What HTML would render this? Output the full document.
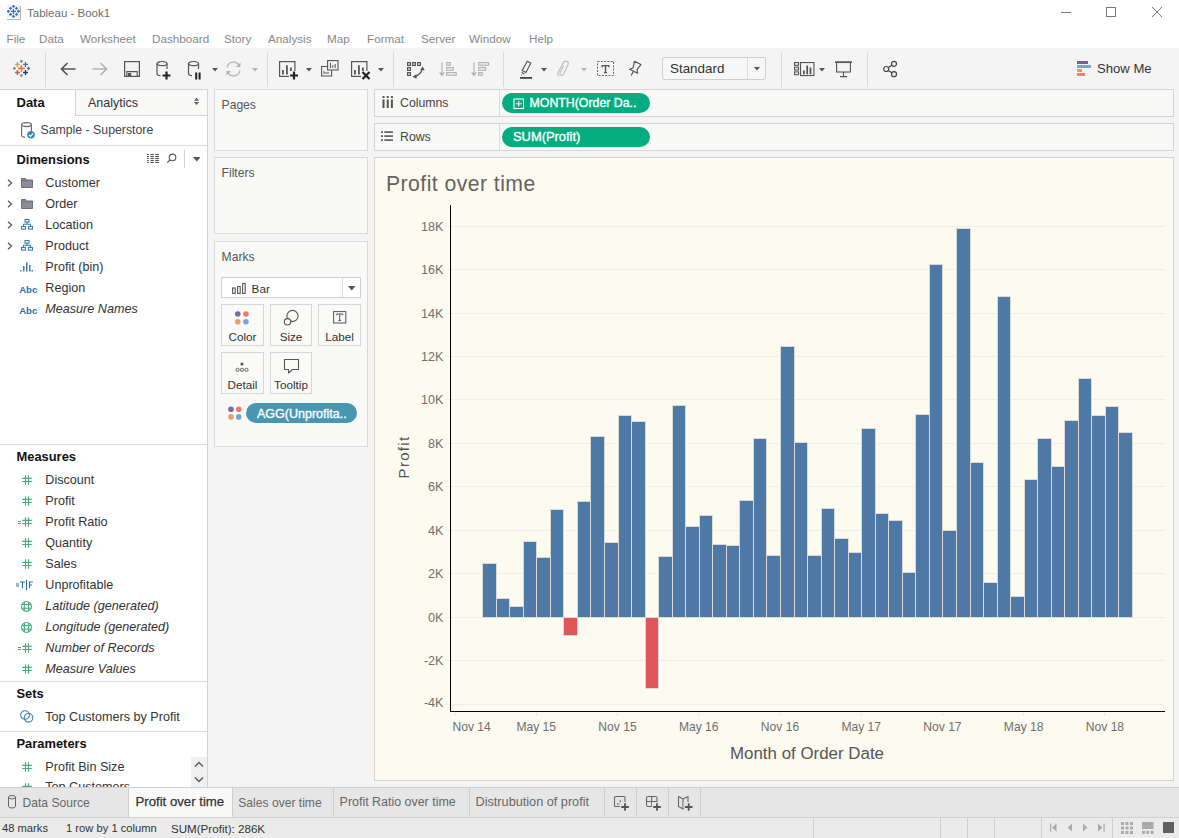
<!DOCTYPE html><html><head><meta charset="utf-8"><style>
html,body{margin:0;padding:0;}body{width:1179px;height:838px;position:relative;overflow:hidden;background:#f4f4f4;font-family:"Liberation Sans",sans-serif;}
.t{position:absolute;white-space:nowrap;}.r{position:absolute;}svg.r{overflow:visible}
</style></head><body>
<div class="r" style="left:0px;top:0px;width:1179px;height:48px;background:#ffffff;"></div>
<div class="r" style="left:7px;top:5px;width:13px;height:13px;background:#f0f1f2;"></div>
<div class="r" style="left:20px;top:6px;width:1px;height:14px;background:#b4b4b4;"></div>
<div class="r" style="left:7px;top:19px;width:14px;height:1px;background:#b4b4b4;"></div>
<svg class="r" style="left:0px;top:0px;" width="1" height="1" viewBox="0 0 1 1"><path d="M11.0 11.4H16.0M13.5 8.9V13.9" stroke="#2e75c0" stroke-width="1.2"/><path d="M12.1 6.4H14.9M13.5 5.0V7.800000000000001" stroke="#2e75c0" stroke-width="1.3"/><path d="M9.1 8.4H11.9M10.5 7.0V9.8" stroke="#2e75c0" stroke-width="1.3"/><path d="M15.1 8.4H17.9M16.5 7.0V9.8" stroke="#2e75c0" stroke-width="1.3"/><path d="M7.0 11.4H9.8M8.4 10.0V12.8" stroke="#2e75c0" stroke-width="1.3"/><path d="M17.1 11.4H19.9M18.5 10.0V12.8" stroke="#2e75c0" stroke-width="1.3"/><path d="M9.1 14.4H11.9M10.5 13.0V15.8" stroke="#2e75c0" stroke-width="1.3"/><path d="M15.1 14.4H17.9M16.5 13.0V15.8" stroke="#2e75c0" stroke-width="1.3"/><path d="M12.1 16.4H14.9M13.5 14.999999999999998V17.799999999999997" stroke="#2e75c0" stroke-width="1.3"/></svg>
<div class="t" style="left:27.00px;top:8.27px;font-size:11.5px;line-height:11.5px;color:#6d6d6d;font-weight:normal;font-style:normal;">Tableau - Book1</div>
<div class="r" style="left:1061px;top:12px;width:10px;height:1px;background:#7a7a7a;"></div>
<div class="r" style="left:1106px;top:7px;width:10px;height:10px;background:none;border:1px solid #7a7a7a;box-sizing:border-box;"></div>
<svg class="r" style="left:1152px;top:7px;" width="10" height="10" viewBox="0 0 10 10"><path d="M0 0L10 10M10 0L0 10" stroke="#7a7a7a" stroke-width="1"/></svg>
<div class="t" style="left:6.50px;top:33.30px;font-size:11.7px;line-height:11.7px;color:#888;font-weight:normal;font-style:normal;">File</div>
<div class="t" style="left:39.00px;top:33.30px;font-size:11.7px;line-height:11.7px;color:#888;font-weight:normal;font-style:normal;">Data</div>
<div class="t" style="left:80.00px;top:33.30px;font-size:11.7px;line-height:11.7px;color:#888;font-weight:normal;font-style:normal;">Worksheet</div>
<div class="t" style="left:152.00px;top:33.30px;font-size:11.7px;line-height:11.7px;color:#888;font-weight:normal;font-style:normal;">Dashboard</div>
<div class="t" style="left:224.00px;top:33.30px;font-size:11.7px;line-height:11.7px;color:#888;font-weight:normal;font-style:normal;">Story</div>
<div class="t" style="left:268.00px;top:33.30px;font-size:11.7px;line-height:11.7px;color:#888;font-weight:normal;font-style:normal;">Analysis</div>
<div class="t" style="left:327.00px;top:33.30px;font-size:11.7px;line-height:11.7px;color:#888;font-weight:normal;font-style:normal;">Map</div>
<div class="t" style="left:367.00px;top:33.30px;font-size:11.7px;line-height:11.7px;color:#888;font-weight:normal;font-style:normal;">Format</div>
<div class="t" style="left:421.00px;top:33.30px;font-size:11.7px;line-height:11.7px;color:#888;font-weight:normal;font-style:normal;">Server</div>
<div class="t" style="left:469.00px;top:33.30px;font-size:11.7px;line-height:11.7px;color:#888;font-weight:normal;font-style:normal;">Window</div>
<div class="t" style="left:529.00px;top:33.30px;font-size:11.7px;line-height:11.7px;color:#888;font-weight:normal;font-style:normal;">Help</div>
<div class="r" style="left:0px;top:48px;width:1179px;height:41px;background:#f4f4f4;"></div>
<div class="r" style="left:0px;top:89px;width:208px;height:1px;background:#d4d4d4;"></div>
<div class="r" style="left:45px;top:52px;width:1px;height:35px;background:#d9d9d9;"></div>
<div class="r" style="left:267px;top:52px;width:1px;height:35px;background:#d9d9d9;"></div>
<div class="r" style="left:393px;top:52px;width:1px;height:35px;background:#d9d9d9;"></div>
<div class="r" style="left:503px;top:52px;width:1px;height:35px;background:#d9d9d9;"></div>
<div class="r" style="left:781px;top:52px;width:1px;height:35px;background:#d9d9d9;"></div>
<div class="r" style="left:867px;top:52px;width:1px;height:35px;background:#d9d9d9;"></div>
<svg class="r" style="left:0px;top:0px;" width="1" height="1" viewBox="0 0 1 1"><path d="M18.0 68.4H24.799999999999997M21.4 65.0V71.80000000000001" stroke="#e07b39" stroke-width="1.6"/><path d="M14.899999999999999 64.4H19.9M17.4 61.900000000000006V66.9" stroke="#e39a2d" stroke-width="1.4"/><path d="M23.0 64.4H28.0M25.5 61.900000000000006V66.9" stroke="#4a6fa5" stroke-width="1.4"/><path d="M14.899999999999999 72.5H19.9M17.4 70.0V75.0" stroke="#c0612b" stroke-width="1.4"/><path d="M23.0 72.5H28.0M25.5 70.0V75.0" stroke="#1f3d8a" stroke-width="1.4"/><path d="M19.799999999999997 61.4H23.0M21.4 59.8V63.0" stroke="#5a9fc0" stroke-width="1.3"/><path d="M12.8 68.4H16.0M14.4 66.80000000000001V70.0" stroke="#5a9fc0" stroke-width="1.3"/><path d="M26.9 68.4H30.1M28.5 66.80000000000001V70.0" stroke="#4a6fa5" stroke-width="1.3"/><path d="M19.799999999999997 75.5H23.0M21.4 73.9V77.1" stroke="#8a95aa" stroke-width="1.3"/></svg>
<svg class="r" style="left:60px;top:62px;" width="16" height="14" viewBox="0 0 16 14"><path d="M15.5 7H1.5M7.5 1L1.5 7L7.5 13" fill="none" stroke="#555" stroke-width="1.7"/></svg>
<svg class="r" style="left:92px;top:62px;" width="16" height="14" viewBox="0 0 16 14"><path d="M0.5 7H14.5M8.5 1L14.5 7L8.5 13" fill="none" stroke="#b4b4b4" stroke-width="1.7"/></svg>
<svg class="r" style="left:124px;top:61px;" width="16" height="16" viewBox="0 0 16 16"><rect x="0.6" y="0.6" width="14.8" height="14.8" fill="none" stroke="#555" stroke-width="1.2"/><path d="M2.8 15.4V10.6h10.4v4.8" fill="none" stroke="#555" stroke-width="1.1"/><rect x="3.8" y="12" width="3.4" height="3.4" fill="#555"/></svg>
<svg class="r" style="left:156px;top:61px;" width="16" height="19" viewBox="0 0 16 19"><g transform="translate(0.5,0)" fill="none" stroke="#555" stroke-width="1.2"><ellipse cx="5.5" cy="2.6" rx="5" ry="2.1"/><path d="M0.5 2.6V12.5Q0.5 14.6 4 14.6M10.5 2.6V8"/></g><path d="M10.5 10.5v8M6.5 14.5h8" stroke="#222" stroke-width="2.2"/></svg>
<svg class="r" style="left:188px;top:61px;" width="14" height="19" viewBox="0 0 14 19"><g transform="translate(0,0)" fill="none" stroke="#555" stroke-width="1.2"><ellipse cx="5.5" cy="2.6" rx="5" ry="2.1"/><path d="M0.5 2.6V12.5Q0.5 14.6 4 14.6M10.5 2.6V8"/></g><path d="M8.2 11.5v7M11.6 11.5v7" stroke="#222" stroke-width="2"/></svg>
<svg class="r" style="left:212px;top:67.5px;" width="6" height="4" viewBox="0 0 6 4"><path d="M0 0H6L3 3.5Z" fill="#555"/></svg>
<svg class="r" style="left:225px;top:61px;" width="17" height="16" viewBox="0 0 17 16"><g fill="none" stroke="#b4b4b4" stroke-width="1.3"><path d="M2.2 6.5A6.3 6.3 0 0 1 14 4.5"/><path d="M14.8 9.5A6.3 6.3 0 0 1 3 11.5"/></g><path d="M15.5 1.5V6H11Z" fill="#b4b4b4"/><path d="M1.5 14.5V10H6Z" fill="#b4b4b4"/></svg>
<svg class="r" style="left:252px;top:67.5px;" width="6" height="4" viewBox="0 0 6 4"><path d="M0 0H6L3 3.5Z" fill="#b4b4b4"/></svg>
<svg class="r" style="left:279px;top:61px;" width="20" height="19" viewBox="0 0 20 19"><g transform="translate(0,0)"><rect x="0.6" y="0.6" width="15.3" height="14.8" fill="none" stroke="#555" stroke-width="1.2"/><rect x="3" y="9" width="1.8" height="4.5" fill="#555"/><rect x="7" y="4.2" width="1.8" height="9.3" fill="#555"/><rect x="11" y="6.5" width="1.8" height="7" fill="#555"/></g><rect x="10" y="10" width="9" height="9" fill="#f4f4f4"/><path d="M15 10.5v8M11 14.5h8" stroke="#222" stroke-width="2.2"/></svg>
<svg class="r" style="left:305.5px;top:67.5px;" width="6" height="4" viewBox="0 0 6 4"><path d="M0 0H6L3 3.5Z" fill="#555"/></svg>
<svg class="r" style="left:321px;top:60px;" width="18" height="17" viewBox="0 0 18 17"><rect x="6.6" y="0.6" width="10.4" height="9.4" fill="#f4f4f4" stroke="#555" stroke-width="1.1"/><path d="M9.5 3v5M11.8 5v3M14.2 4v4" stroke="#555" stroke-width="1"/><path d="M6 6.5H0.6V16H10.6V10.5" fill="none" stroke="#555" stroke-width="1.1"/><path d="M3 11v3M5 12v2M7 12v2" stroke="#555" stroke-width="1"/></svg>
<svg class="r" style="left:351px;top:61px;" width="20" height="19" viewBox="0 0 20 19"><g transform="translate(0,0)"><rect x="0.6" y="0.6" width="15.3" height="14.8" fill="none" stroke="#555" stroke-width="1.2"/><rect x="3" y="9" width="1.8" height="4.5" fill="#555"/><rect x="7" y="4.2" width="1.8" height="9.3" fill="#555"/><rect x="11" y="6.5" width="1.8" height="7" fill="#555"/></g><rect x="10" y="10" width="9" height="9" fill="#f4f4f4"/><path d="M11.5 11L18.5 18M18.5 11L11.5 18" stroke="#222" stroke-width="2.2"/></svg>
<svg class="r" style="left:377.5px;top:67.5px;" width="6" height="4" viewBox="0 0 6 4"><path d="M0 0H6L3 3.5Z" fill="#555"/></svg>
<svg class="r" style="left:407px;top:62px;" width="18" height="18" viewBox="0 0 18 18"><rect x="0.6" y="0.6" width="2.8" height="2.8" fill="none" stroke="#555" stroke-width="1.2"/><rect x="5.6" y="0.6" width="2.8" height="2.8" fill="none" stroke="#555" stroke-width="1.2"/><rect x="10.6" y="0.6" width="2.8" height="2.8" fill="none" stroke="#555" stroke-width="1.2"/><rect x="0.6" y="5.6" width="2.8" height="2.8" fill="none" stroke="#555" stroke-width="1.2"/><rect x="0.6" y="10.6" width="2.8" height="2.8" fill="none" stroke="#555" stroke-width="1.2"/><path d="M8 14.5Q13.5 13 15.5 6.5" fill="none" stroke="#555" stroke-width="1.2"/><path d="M5.5 14.8L9.5 12.2L9.6 16.8Z" fill="#555"/><path d="M15.8 4.5L17.7 8.6L13.2 7.8Z" fill="#555"/></svg>
<svg class="r" style="left:438.5px;top:62px;" width="20" height="16" viewBox="0 0 20 16"><path d="M3 0.5V13" stroke="#b4b4b4" stroke-width="1.2"/><path d="M0 10.5H6L3 14.5Z" fill="#b4b4b4"/><rect x="7.6" y="0.6" width="3.6" height="2.6" fill="none" stroke="#b4b4b4" stroke-width="1.2"/><rect x="7.6" y="5.6" width="6.6" height="2.6" fill="none" stroke="#b4b4b4" stroke-width="1.2"/><rect x="7.6" y="10.6" width="9.6" height="2.6" fill="none" stroke="#b4b4b4" stroke-width="1.2"/></svg>
<svg class="r" style="left:470.5px;top:62px;" width="20" height="16" viewBox="0 0 20 16"><path d="M3 0.5V13" stroke="#b4b4b4" stroke-width="1.2"/><path d="M0 10.5H6L3 14.5Z" fill="#b4b4b4"/><rect x="7.6" y="0.6" width="10" height="2.6" fill="none" stroke="#b4b4b4" stroke-width="1.2"/><rect x="7.6" y="5.6" width="7" height="2.6" fill="none" stroke="#b4b4b4" stroke-width="1.2"/><rect x="7.6" y="10.6" width="3.6" height="2.6" fill="none" stroke="#b4b4b4" stroke-width="1.2"/></svg>
<svg class="r" style="left:0px;top:0px;" width="1" height="1" viewBox="0 0 1 1"><path d="M527.2 61.2L530.9 63L525.9 72.6L522.2 70.6Z" fill="none" stroke="#555" stroke-width="1.15" stroke-linejoin="round"/><path d="M521.6 72.2L524.3 74" stroke="#555" stroke-width="1.1"/><path d="M521 75.3L521.9 74.8" stroke="#555" stroke-width="1"/><rect x="520" y="77" width="12" height="1.8" fill="#444"/></svg>
<svg class="r" style="left:540.5px;top:67.5px;" width="6" height="4" viewBox="0 0 6 4"><path d="M0 0H6L3 3.5Z" fill="#555"/></svg>
<svg class="r" style="left:0px;top:0px;" width="1" height="1" viewBox="0 0 1 1"><path d="M563.6 65.6L560.2 72.6Q559.3 74.6 561 75.3Q562.6 76 563.5 74L568 64.8Q569.2 62 566.6 61.2Q564.2 60.5 563 63L558.2 72.5Q557 75.5 558.8 76.2" fill="none" stroke="#b8b8b8" stroke-width="1.05"/></svg>
<svg class="r" style="left:580.5px;top:67.5px;" width="6" height="4" viewBox="0 0 6 4"><path d="M0 0H6L3 3.5Z" fill="#b4b4b4"/></svg>
<svg class="r" style="left:0px;top:0px;" width="1" height="1" viewBox="0 0 1 1"><rect x="597.5" y="61.5" width="16" height="14" fill="none" stroke="#666" stroke-width="1" stroke-dasharray="2 1.3"/><path d="M602.2 67.2V65.6H608.8V67.2M605.5 65.6V72.6M604 72.6H607" fill="none" stroke="#555" stroke-width="1.35"/></svg>
<svg class="r" style="left:0px;top:0px;" width="1" height="1" viewBox="0 0 1 1"><path d="M634.5 61.3L640.9 64.6L637.1 69.4L637.6 73.3L629.6 69.3L633 68Z" fill="none" stroke="#555" stroke-width="1.15" stroke-linejoin="round"/><path d="M633.4 71.4L631.2 75.5" stroke="#555" stroke-width="1.2"/></svg>
<div class="r" style="left:662px;top:57px;width:104px;height:23px;background:#f7f7f7;border:1px solid #cfcfcf;box-sizing:border-box;border-radius:2px;"></div>
<div class="r" style="left:747px;top:58px;width:1px;height:21px;background:#dcdcdc;"></div>
<div class="t" style="left:670.00px;top:61.86px;font-size:13.4px;line-height:13.4px;color:#333;font-weight:normal;font-style:normal;">Standard</div>
<svg class="r" style="left:753.5px;top:67px;" width="6" height="4" viewBox="0 0 6 4"><path d="M0 0H6L3 3.5Z" fill="#555"/></svg>
<svg class="r" style="left:794px;top:62px;" width="21" height="14" viewBox="0 0 21 14"><g fill="none" stroke="#555" stroke-width="1.1"><rect x="0.55" y="0.55" width="4" height="2.8"/><rect x="0.55" y="5.2" width="4" height="2.8"/><rect x="0.55" y="9.9" width="4" height="2.8"/><rect x="6.55" y="0.55" width="13.4" height="13"/></g><rect x="9" y="8.5" width="1.8" height="3.8" fill="#555"/><rect x="12.3" y="3.5" width="1.8" height="8.8" fill="#555"/><rect x="15.6" y="5.5" width="1.8" height="6.8" fill="#555"/></svg>
<svg class="r" style="left:819px;top:67.5px;" width="6" height="4" viewBox="0 0 6 4"><path d="M0 0H6L3 3.5Z" fill="#555"/></svg>
<svg class="r" style="left:835px;top:61px;" width="18" height="17" viewBox="0 0 18 17"><rect x="0" y="0.3" width="17" height="1.6" fill="#555"/><rect x="1.6" y="1.5" width="13.8" height="9.5" fill="none" stroke="#555" stroke-width="1.1"/><path d="M8.5 11V15.5M5 15.6H12" stroke="#555" stroke-width="1.1"/></svg>
<svg class="r" style="left:882px;top:60px;" width="17" height="18" viewBox="0 0 17 18"><g fill="none" stroke="#444" stroke-width="1.2"><circle cx="4.2" cy="9" r="2.5"/><circle cx="12" cy="3.8" r="2.5"/><circle cx="12" cy="14.2" r="2.5"/><path d="M6.3 7.6L9.9 5.2M6.3 10.4L9.9 12.8"/></g></svg>
<div class="r" style="left:1077px;top:61px;width:11px;height:3px;background:#7b5e9a;"></div>
<div class="r" style="left:1077px;top:65px;width:14px;height:3px;background:#79a6cf;"></div>
<div class="r" style="left:1077px;top:69px;width:5px;height:3px;background:#e59b66;"></div>
<div class="r" style="left:1077px;top:73px;width:8px;height:3px;background:#ec7f73;"></div>
<div class="t" style="left:1097.00px;top:61.91px;font-size:13.1px;line-height:13.1px;color:#333;font-weight:normal;font-style:normal;">Show Me</div>
<div class="r" style="left:0px;top:90px;width:207px;height:697px;background:#ffffff;"></div>
<div class="r" style="left:207px;top:90px;width:1px;height:697px;background:#d4d4d4;"></div>
<div class="r" style="left:75px;top:90px;width:132px;height:25px;background:#f9f9f8;"></div>
<div class="r" style="left:75px;top:90px;width:1px;height:25px;background:#d4d4d4;"></div>
<div class="r" style="left:75px;top:115px;width:132px;height:1px;background:#d4d4d4;"></div>
<div class="t" style="left:16.50px;top:96.20px;font-size:13px;line-height:13px;color:#111;font-weight:bold;font-style:normal;">Data</div>
<div class="t" style="left:88.00px;top:96.82px;font-size:12.5px;line-height:12.5px;color:#333;font-weight:normal;font-style:normal;">Analytics</div>
<svg class="r" style="left:0px;top:0px;" width="1" height="1" viewBox="0 0 1 1"><path d="M193.8 100.8H199.2L196.5 97.8Z M193.8 102H199.2L196.5 105Z" fill="#666"/></svg>
<svg class="r" style="left:21px;top:122px;" width="15" height="17" viewBox="0 0 15 17"><g fill="none" stroke="#666" stroke-width="1.1"><ellipse cx="5.5" cy="2.6" rx="4.9" ry="2"/><path d="M0.6 2.6V13.3Q0.6 15.2 4 15.3M10.4 2.6V9"/></g><circle cx="10" cy="12.8" r="3.8" fill="#2f87c3"/><path d="M8 12.8L9.5 14.3L12 11.5" fill="none" stroke="#fff" stroke-width="1.2"/></svg>
<div class="t" style="left:40.50px;top:124.29px;font-size:12.3px;line-height:12.3px;color:#444;font-weight:normal;font-style:normal;">Sample - Superstore</div>
<div class="r" style="left:0px;top:145px;width:207px;height:1px;background:#dcdcdc;"></div>
<div class="t" style="left:16.50px;top:153.58px;font-size:12.9px;line-height:12.9px;color:#111;font-weight:bold;font-style:normal;">Dimensions</div>
<svg class="r" style="left:0px;top:0px;" width="1" height="1" viewBox="0 0 1 1"><rect x="147" y="153.9" width="1.8" height="1.1" fill="#555"/><rect x="150.4" y="153.9" width="3.4" height="1.1" fill="#555"/><rect x="155.2" y="153.9" width="3.7" height="1.1" fill="#555"/><rect x="147" y="155.9" width="1.8" height="1.1" fill="#555"/><rect x="150.4" y="155.9" width="3.4" height="1.1" fill="#555"/><rect x="155.2" y="155.9" width="3.7" height="1.1" fill="#555"/><rect x="147" y="157.9" width="1.8" height="1.1" fill="#555"/><rect x="150.4" y="157.9" width="3.4" height="1.1" fill="#555"/><rect x="155.2" y="157.9" width="3.7" height="1.1" fill="#555"/><rect x="147" y="159.9" width="1.8" height="1.1" fill="#555"/><rect x="150.4" y="159.9" width="3.4" height="1.1" fill="#555"/><rect x="155.2" y="159.9" width="3.7" height="1.1" fill="#555"/><rect x="147" y="161.9" width="1.8" height="1.1" fill="#555"/><rect x="150.4" y="161.9" width="3.4" height="1.1" fill="#555"/><rect x="155.2" y="161.9" width="3.7" height="1.1" fill="#555"/></svg>
<svg class="r" style="left:0px;top:0px;" width="1" height="1" viewBox="0 0 1 1"><circle cx="172.5" cy="157.4" r="3.3" fill="none" stroke="#555" stroke-width="1.1"/><path d="M170 160L167.3 162.7" stroke="#555" stroke-width="1.2"/></svg>
<div class="r" style="left:184px;top:150px;width:1px;height:18px;background:#d6d6d6;"></div>
<svg class="r" style="left:193px;top:157px;" width="8" height="5" viewBox="0 0 8 5"><path d="M0 0H7.5L3.75 4.5Z" fill="#555"/></svg>
<svg class="r" style="left:7px;top:178.7px;" width="6" height="8" viewBox="0 0 6 8"><path d="M1 0.8L4.6 4L1 7.2" fill="none" stroke="#555" stroke-width="1.2"/></svg>
<svg class="r" style="left:21px;top:177.7px;" width="12" height="10" viewBox="0 0 12 10"><path d="M0.5 9.5V0.5H4.5L5.5 2H11.5V9.5Z" fill="#8a8d99" stroke="#6d707c" stroke-width="1"/><path d="M0.5 2.8H11.5" stroke="#6d707c" stroke-width="0.8"/></svg>
<div class="t" style="left:45.30px;top:177.23px;font-size:12.6px;line-height:12.6px;color:#333;font-weight:normal;font-style:normal;">Customer</div>
<svg class="r" style="left:7px;top:199.7px;" width="6" height="8" viewBox="0 0 6 8"><path d="M1 0.8L4.6 4L1 7.2" fill="none" stroke="#555" stroke-width="1.2"/></svg>
<svg class="r" style="left:21px;top:198.7px;" width="12" height="10" viewBox="0 0 12 10"><path d="M0.5 9.5V0.5H4.5L5.5 2H11.5V9.5Z" fill="#8a8d99" stroke="#6d707c" stroke-width="1"/><path d="M0.5 2.8H11.5" stroke="#6d707c" stroke-width="0.8"/></svg>
<div class="t" style="left:45.30px;top:198.23px;font-size:12.6px;line-height:12.6px;color:#333;font-weight:normal;font-style:normal;">Order</div>
<svg class="r" style="left:7px;top:220.7px;" width="6" height="8" viewBox="0 0 6 8"><path d="M1 0.8L4.6 4L1 7.2" fill="none" stroke="#555" stroke-width="1.2"/></svg>
<svg class="r" style="left:21px;top:219.2px;" width="12" height="11" viewBox="0 0 12 11"><g fill="none" stroke="#3b7ea8" stroke-width="1.1"><rect x="4" y="0.5" width="4" height="2.6"/><rect x="0.5" y="7.5" width="4" height="2.6"/><rect x="7.5" y="7.5" width="4" height="2.6"/><path d="M6 3.1V5.3M2.5 7.5V5.3H9.5V7.5"/></g></svg>
<div class="t" style="left:45.30px;top:219.23px;font-size:12.6px;line-height:12.6px;color:#333;font-weight:normal;font-style:normal;">Location</div>
<svg class="r" style="left:7px;top:241.7px;" width="6" height="8" viewBox="0 0 6 8"><path d="M1 0.8L4.6 4L1 7.2" fill="none" stroke="#555" stroke-width="1.2"/></svg>
<svg class="r" style="left:21px;top:240.2px;" width="12" height="11" viewBox="0 0 12 11"><g fill="none" stroke="#3b7ea8" stroke-width="1.1"><rect x="4" y="0.5" width="4" height="2.6"/><rect x="0.5" y="7.5" width="4" height="2.6"/><rect x="7.5" y="7.5" width="4" height="2.6"/><path d="M6 3.1V5.3M2.5 7.5V5.3H9.5V7.5"/></g></svg>
<div class="t" style="left:45.30px;top:240.23px;font-size:12.6px;line-height:12.6px;color:#333;font-weight:normal;font-style:normal;">Product</div>
<svg class="r" style="left:20px;top:261.7px;" width="13" height="10" viewBox="0 0 13 10"><g fill="#3b7ea8"><rect x="0" y="8" width="1.5" height="1.5"/><rect x="3" y="4" width="1.5" height="5.5"/><rect x="6" y="0.5" width="1.5" height="9"/><rect x="9" y="3" width="1.5" height="6.5"/><rect x="11.5" y="8" width="1.5" height="1.5"/></g></svg>
<div class="t" style="left:45.30px;top:261.23px;font-size:12.6px;line-height:12.6px;color:#333;font-weight:normal;font-style:normal;">Profit (bin)</div>
<div class="t" style="left:19.20px;top:284.57px;font-size:9.6px;line-height:9.6px;color:#2e6f9e;font-weight:bold;font-style:normal;letter-spacing:0px;">Abc</div>
<div class="t" style="left:45.30px;top:282.23px;font-size:12.6px;line-height:12.6px;color:#333;font-weight:normal;font-style:normal;">Region</div>
<div class="t" style="left:19.20px;top:305.57px;font-size:9.6px;line-height:9.6px;color:#2e6f9e;font-weight:bold;font-style:normal;letter-spacing:0px;">Abc</div>
<div class="t" style="left:45.30px;top:303.23px;font-size:12.6px;line-height:12.6px;color:#333;font-weight:normal;font-style:italic;">Measure Names</div>
<div class="r" style="left:0px;top:444px;width:207px;height:1px;background:#dcdcdc;"></div>
<div class="t" style="left:16.50px;top:450.58px;font-size:12.9px;line-height:12.9px;color:#111;font-weight:bold;font-style:normal;">Measures</div>
<svg class="r" style="left:0px;top:0px;" width="1" height="1" viewBox="0 0 1 1"><g stroke="#4aa97f" stroke-width="1.15"><path d="M25.5 475.20V484.80M28.5 475.20V484.80M22.2 478.40H31.8M22.2 481.50H31.8"/></g></svg>
<div class="t" style="left:45.30px;top:474.03px;font-size:12.6px;line-height:12.6px;color:#333;font-weight:normal;font-style:normal;">Discount</div>
<svg class="r" style="left:0px;top:0px;" width="1" height="1" viewBox="0 0 1 1"><g stroke="#4aa97f" stroke-width="1.15"><path d="M25.5 496.20V505.80M28.5 496.20V505.80M22.2 499.40H31.8M22.2 502.50H31.8"/></g></svg>
<div class="t" style="left:45.30px;top:495.03px;font-size:12.6px;line-height:12.6px;color:#333;font-weight:normal;font-style:normal;">Profit</div>
<svg class="r" style="left:0px;top:0px;" width="1" height="1" viewBox="0 0 1 1"><g stroke="#4aa97f" stroke-width="1.15"><path d="M25.5 517.20V526.80M28.5 517.20V526.80M22.2 520.40H31.8M22.2 523.50H31.8"/></g><g stroke="#4aa97f" stroke-width="1.2"><path d="M18 521.50H21M18 523.50H21"/></g></svg>
<div class="t" style="left:45.30px;top:516.03px;font-size:12.6px;line-height:12.6px;color:#333;font-weight:normal;font-style:normal;">Profit Ratio</div>
<svg class="r" style="left:0px;top:0px;" width="1" height="1" viewBox="0 0 1 1"><g stroke="#4aa97f" stroke-width="1.15"><path d="M25.5 538.20V547.80M28.5 538.20V547.80M22.2 541.40H31.8M22.2 544.50H31.8"/></g></svg>
<div class="t" style="left:45.30px;top:537.03px;font-size:12.6px;line-height:12.6px;color:#333;font-weight:normal;font-style:normal;">Quantity</div>
<svg class="r" style="left:0px;top:0px;" width="1" height="1" viewBox="0 0 1 1"><g stroke="#4aa97f" stroke-width="1.15"><path d="M25.5 559.20V568.80M28.5 559.20V568.80M22.2 562.40H31.8M22.2 565.50H31.8"/></g></svg>
<div class="t" style="left:45.30px;top:558.03px;font-size:12.6px;line-height:12.6px;color:#333;font-weight:normal;font-style:normal;">Sales</div>
<svg class="r" style="left:0px;top:0px;" width="1" height="1" viewBox="0 0 1 1"><g stroke="#2e7099" stroke-width="1.1" fill="none"><path d="M16 584.00H19.1M16 586.00H19.1"/><path d="M20 582.00H25M22.5 582.00V588.20"/><path d="M26.5 579.80V590.30"/><path d="M29.5 588.20V582.00H32.9M29.5 585.00H32"/></g></svg>
<div class="t" style="left:45.30px;top:579.03px;font-size:12.6px;line-height:12.6px;color:#333;font-weight:normal;font-style:normal;">Unprofitable</div>
<svg class="r" style="left:0px;top:0px;" width="1" height="1" viewBox="0 0 1 1"><g fill="none" stroke="#4aa97f" stroke-width="1.1"><circle cx="26.5" cy="606.40" r="4.95"/><path d="M24.5 601.90Q24 606.40 24.5 610.90M28.5 601.90Q29 606.40 28.5 610.90M21.8 604.50H31.2M21.8 608.30H31.2"/></g></svg>
<div class="t" style="left:45.30px;top:600.03px;font-size:12.6px;line-height:12.6px;color:#333;font-weight:normal;font-style:italic;">Latitude (generated)</div>
<svg class="r" style="left:0px;top:0px;" width="1" height="1" viewBox="0 0 1 1"><g fill="none" stroke="#4aa97f" stroke-width="1.1"><circle cx="26.5" cy="627.40" r="4.95"/><path d="M24.5 622.90Q24 627.40 24.5 631.90M28.5 622.90Q29 627.40 28.5 631.90M21.8 625.50H31.2M21.8 629.30H31.2"/></g></svg>
<div class="t" style="left:45.30px;top:621.03px;font-size:12.6px;line-height:12.6px;color:#333;font-weight:normal;font-style:italic;">Longitude (generated)</div>
<svg class="r" style="left:0px;top:0px;" width="1" height="1" viewBox="0 0 1 1"><g stroke="#4aa97f" stroke-width="1.15"><path d="M25.5 643.20V652.80M28.5 643.20V652.80M22.2 646.40H31.8M22.2 649.50H31.8"/></g><g stroke="#4aa97f" stroke-width="1.2"><path d="M18 647.50H21M18 649.50H21"/></g></svg>
<div class="t" style="left:45.30px;top:642.03px;font-size:12.6px;line-height:12.6px;color:#333;font-weight:normal;font-style:italic;">Number of Records</div>
<svg class="r" style="left:0px;top:0px;" width="1" height="1" viewBox="0 0 1 1"><g stroke="#4aa97f" stroke-width="1.15"><path d="M25.5 664.20V673.80M28.5 664.20V673.80M22.2 667.40H31.8M22.2 670.50H31.8"/></g></svg>
<div class="t" style="left:45.30px;top:663.03px;font-size:12.6px;line-height:12.6px;color:#333;font-weight:normal;font-style:italic;">Measure Values</div>
<div class="r" style="left:0px;top:681px;width:207px;height:1px;background:#dcdcdc;"></div>
<div class="t" style="left:16.50px;top:688.08px;font-size:12.9px;line-height:12.9px;color:#111;font-weight:bold;font-style:normal;">Sets</div>
<svg class="r" style="left:20px;top:710px;" width="14" height="13" viewBox="0 0 14 13"><g fill="none" stroke="#3b7ea8" stroke-width="1.1"><circle cx="5" cy="5" r="4.3"/><circle cx="8.5" cy="7.8" r="4.3"/></g></svg>
<div class="t" style="left:45.30px;top:710.63px;font-size:12.6px;line-height:12.6px;color:#333;font-weight:normal;font-style:normal;">Top Customers by Profit</div>
<div class="r" style="left:0px;top:731px;width:207px;height:1px;background:#dcdcdc;"></div>
<div class="t" style="left:16.50px;top:737.68px;font-size:12.9px;line-height:12.9px;color:#111;font-weight:bold;font-style:normal;">Parameters</div>
<svg class="r" style="left:0px;top:0px;" width="1" height="1" viewBox="0 0 1 1"><g stroke="#4aa97f" stroke-width="1.15"><path d="M25.5 762.20V771.80M28.5 762.20V771.80M22.2 765.40H31.8M22.2 768.50H31.8"/></g></svg>
<div class="t" style="left:45.30px;top:761.03px;font-size:12.6px;line-height:12.6px;color:#333;font-weight:normal;font-style:normal;">Profit Bin Size</div>
<div class="r" style="left:0;top:780px;width:190px;height:7px;overflow:hidden;">
<svg class="r" style="left:21px;top:3px" width="12" height="11"><g stroke="#4aa97f" stroke-width="1.15"><path d="M4.5 0.3V10M7.5 0.3V10M1.2 3.4H10.8M1.2 6.6H10.8"/></g></svg>
<div class="t" style="left:45.3px;top:1.03px;font-size:12.6px;line-height:12.6px;color:#333">Top Customers</div>
</div>
<div class="r" style="left:191px;top:757px;width:16px;height:30px;background:#f0f0f0;"></div>
<svg class="r" style="left:194px;top:760px;" width="10" height="26" viewBox="0 0 10 26"><path d="M1 6.5L5 2.5L9 6.5M1 17.5L5 21.5L9 17.5" fill="none" stroke="#555" stroke-width="1.3"/></svg>
<div class="r" style="left:214px;top:89px;width:154px;height:62px;background:#f9f9f8;border:1px solid #d9d9d9;box-sizing:border-box;"></div>
<div class="t" style="left:221.60px;top:99.36px;font-size:12.1px;line-height:12.1px;color:#555;font-weight:normal;font-style:normal;">Pages</div>
<div class="r" style="left:214px;top:157px;width:154px;height:77px;background:#f9f9f8;border:1px solid #d9d9d9;box-sizing:border-box;"></div>
<div class="t" style="left:221.60px;top:167.36px;font-size:12.1px;line-height:12.1px;color:#555;font-weight:normal;font-style:normal;">Filters</div>
<div class="r" style="left:214px;top:241px;width:154px;height:206px;background:#f9f9f8;border:1px solid #d9d9d9;box-sizing:border-box;"></div>
<div class="t" style="left:221.60px;top:250.96px;font-size:12.1px;line-height:12.1px;color:#555;font-weight:normal;font-style:normal;">Marks</div>
<div class="r" style="left:221px;top:277px;width:140px;height:21px;background:#ffffff;border:1px solid #cfcfcf;box-sizing:border-box;"></div>
<div class="r" style="left:342px;top:278px;width:1px;height:19px;background:#dcdcdc;"></div>
<svg class="r" style="left:232px;top:283px;" width="15" height="11" viewBox="0 0 15 11"><g fill="none" stroke="#555" stroke-width="1.1"><rect x="0.6" y="5" width="2.6" height="5.4"/><rect x="5.6" y="3.5" width="2.6" height="6.9"/><rect x="10.6" y="0.6" width="2.6" height="9.8"/></g></svg>
<div class="t" style="left:251.60px;top:282.80px;font-size:11.7px;line-height:11.7px;color:#333;font-weight:normal;font-style:normal;">Bar</div>
<svg class="r" style="left:347.5px;top:286px;" width="8" height="5" viewBox="0 0 8 5"><path d="M0 0H7.5L3.75 4.5Z" fill="#555"/></svg>
<div class="r" style="left:221px;top:304px;width:43px;height:42px;background:#fafaf9;border:1px solid #d6d6d6;box-sizing:border-box;"></div>
<svg class="r" style="left:221px;top:304px;" width="43" height="42" viewBox="0 0 43 42"><circle cx="16.8" cy="10" r="2.8" fill="#7e68a0"/><circle cx="24.9" cy="10" r="2.8" fill="#ea7c6e"/><circle cx="16.8" cy="17.7" r="2.8" fill="#e5a06d"/><circle cx="24.9" cy="17.7" r="2.8" fill="#7ba7cf"/></svg>
<div class="t" style="left:-57.50px;width:600px;text-align:center;top:330.70px;font-size:11.7px;line-height:11.7px;color:#333;font-weight:normal;font-style:normal;">Color</div>
<div class="r" style="left:270px;top:304px;width:42px;height:42px;background:#fafaf9;border:1px solid #d6d6d6;box-sizing:border-box;"></div>
<svg class="r" style="left:270px;top:304px;" width="42" height="42" viewBox="0 0 42 42"><g fill="none" stroke="#555" stroke-width="1.1"><circle cx="22.5" cy="12" r="5.6" fill="#fafaf9"/><circle cx="17.5" cy="17.8" r="3.2" fill="#fafaf9"/></g></svg>
<div class="t" style="left:-9.00px;width:600px;text-align:center;top:330.70px;font-size:11.7px;line-height:11.7px;color:#333;font-weight:normal;font-style:normal;">Size</div>
<div class="r" style="left:318px;top:304px;width:43px;height:42px;background:#fafaf9;border:1px solid #d6d6d6;box-sizing:border-box;"></div>
<svg class="r" style="left:318px;top:304px;" width="43" height="42" viewBox="0 0 43 42"><rect x="15.6" y="7.6" width="12.2" height="11.4" fill="none" stroke="#555" stroke-width="1"/><path d="M18.6 11.2V10H24.8V11.2M21.7 10V16.6M20.3 16.6H23.1" fill="none" stroke="#555" stroke-width="1"/></svg>
<div class="t" style="left:39.50px;width:600px;text-align:center;top:330.70px;font-size:11.7px;line-height:11.7px;color:#333;font-weight:normal;font-style:normal;">Label</div>
<div class="r" style="left:221px;top:352px;width:43px;height:42px;background:#fafaf9;border:1px solid #d6d6d6;box-sizing:border-box;"></div>
<svg class="r" style="left:221px;top:352px;" width="43" height="42" viewBox="0 0 43 42"><circle cx="21" cy="12" r="1.6" fill="#555"/><g fill="none" stroke="#555" stroke-width="0.9"><circle cx="16.5" cy="17.8" r="1.6"/><circle cx="21" cy="17.8" r="1.6"/><circle cx="25.5" cy="17.8" r="1.6"/></g></svg>
<div class="t" style="left:-57.50px;width:600px;text-align:center;top:378.70px;font-size:11.7px;line-height:11.7px;color:#333;font-weight:normal;font-style:normal;">Detail</div>
<div class="r" style="left:270px;top:352px;width:42px;height:42px;background:#fafaf9;border:1px solid #d6d6d6;box-sizing:border-box;"></div>
<svg class="r" style="left:270px;top:352px;" width="42" height="42" viewBox="0 0 42 42"><path d="M14.5 7.5H28.5V17.5H22.5L18.5 21V17.5H14.5Z" fill="none" stroke="#555" stroke-width="1.1" stroke-linejoin="round"/></svg>
<div class="t" style="left:-9.00px;width:600px;text-align:center;top:378.70px;font-size:11.7px;line-height:11.7px;color:#333;font-weight:normal;font-style:normal;">Tooltip</div>
<svg class="r" style="left:227px;top:405px;" width="16" height="16" viewBox="0 0 16 16"><circle cx="4" cy="4.2" r="2.8" fill="#7e68a0"/><circle cx="11.7" cy="4.2" r="2.8" fill="#ea7c6e"/><circle cx="4" cy="11.9" r="2.8" fill="#e5a06d"/><circle cx="11.7" cy="11.9" r="2.8" fill="#7ba7cf"/></svg>
<div class="r" style="left:246px;top:403px;width:111px;height:20px;background:#4996b2;border-radius:10px;"></div>
<div class="t" style="left:257.00px;top:407.72px;font-size:12.5px;line-height:12.5px;color:#ffffff;font-weight:normal;font-style:normal;-webkit-text-stroke:0.35px #fff;">AGG(Unprofita..</div>
<div class="r" style="left:374px;top:89px;width:800px;height:28px;background:#f8f8f7;border:1px solid #d4d4d4;box-sizing:border-box;"></div>
<div class="r" style="left:499px;top:90px;width:1px;height:26px;background:#dcdcdc;"></div>
<div class="r" style="left:374px;top:123px;width:800px;height:28px;background:#f8f8f7;border:1px solid #d4d4d4;box-sizing:border-box;"></div>
<div class="r" style="left:499px;top:124px;width:1px;height:26px;background:#dcdcdc;"></div>
<svg class="r" style="left:381.5px;top:96px;" width="12" height="13" viewBox="0 0 12 13"><g fill="#555"><rect x="0.5" y="3.5" width="2" height="8.5"/><rect x="4.7" y="3.5" width="2" height="8.5"/><rect x="8.9" y="3.5" width="2" height="8.5"/><rect x="0.5" y="0" width="2" height="2"/><rect x="4.7" y="0" width="2" height="2"/><rect x="8.9" y="0" width="2" height="2"/></g></svg>
<div class="t" style="left:400.00px;top:96.79px;font-size:12.3px;line-height:12.3px;color:#444;font-weight:normal;font-style:normal;">Columns</div>
<svg class="r" style="left:381px;top:131px;" width="13" height="11" viewBox="0 0 13 11"><g fill="#555"><rect x="0" y="0.3" width="2" height="1.6"/><rect x="3.3" y="0.3" width="8.7" height="1.6"/><rect x="0" y="4.3" width="2" height="1.6"/><rect x="3.3" y="4.3" width="8.7" height="1.6"/><rect x="0" y="8.3" width="2" height="1.6"/><rect x="3.3" y="8.3" width="8.7" height="1.6"/></g></svg>
<div class="t" style="left:400.00px;top:130.79px;font-size:12.3px;line-height:12.3px;color:#444;font-weight:normal;font-style:normal;">Rows</div>
<div class="r" style="left:502px;top:93px;width:148px;height:20px;background:#03ad80;border-radius:10px;"></div>
<svg class="r" style="left:513px;top:98px;" width="12" height="12" viewBox="0 0 12 12"><rect x="1" y="1" width="9.5" height="9.5" fill="none" stroke="#fff" stroke-width="1.1"/><path d="M5.75 3V8.5M3 5.75H8.5" stroke="#fff" stroke-width="1.1"/></svg>
<div class="t" style="left:529.50px;top:97.25px;font-size:12.35px;line-height:12.35px;color:#ffffff;font-weight:normal;font-style:normal;-webkit-text-stroke:0.35px #fff;">MONTH(Order Da..</div>
<div class="r" style="left:502px;top:127px;width:148px;height:20px;background:#03ad80;border-radius:10px;"></div>
<div class="t" style="left:513.00px;top:130.58px;font-size:12.9px;line-height:12.9px;color:#ffffff;font-weight:normal;font-style:normal;-webkit-text-stroke:0.35px #fff;">SUM(Profit)</div>
<div class="r" style="left:374px;top:157px;width:800px;height:624px;background:#fdfbef;border:1px solid #d4d4d4;box-sizing:border-box;"></div>
<div class="t" style="left:386.00px;top:173.05px;font-size:21.2px;line-height:21.2px;color:#636363;font-weight:normal;font-style:normal;letter-spacing:0.45px;">Profit over time</div>
<svg class="r" style="left:0;top:0" width="1179" height="838" viewBox="0 0 1179 838" shape-rendering="crispEdges"><path d="M445 704.5H1165" stroke="#eeeeee" stroke-width="1"/><path d="M445 660.5H1165" stroke="#eeeeee" stroke-width="1"/><path d="M445 617.5H1165" stroke="#eeeeee" stroke-width="1"/><path d="M445 573.5H1165" stroke="#eeeeee" stroke-width="1"/><path d="M445 530.5H1165" stroke="#eeeeee" stroke-width="1"/><path d="M445 486.5H1165" stroke="#eeeeee" stroke-width="1"/><path d="M445 443.5H1165" stroke="#eeeeee" stroke-width="1"/><path d="M445 399.5H1165" stroke="#eeeeee" stroke-width="1"/><path d="M445 356.5H1165" stroke="#eeeeee" stroke-width="1"/><path d="M445 313.5H1165" stroke="#eeeeee" stroke-width="1"/><path d="M445 269.5H1165" stroke="#eeeeee" stroke-width="1"/><path d="M445 226.5H1165" stroke="#eeeeee" stroke-width="1"/><rect x="482" y="563" width="15" height="55" fill="#dbdad6"/><rect x="483" y="564" width="13" height="53" fill="#4e79a7"/><rect x="496" y="598" width="14" height="20" fill="#dbdad6"/><rect x="497" y="599" width="12" height="18" fill="#4e79a7"/><rect x="509" y="606" width="15" height="12" fill="#dbdad6"/><rect x="510" y="607" width="13" height="10" fill="#4e79a7"/><rect x="523" y="541" width="14" height="77" fill="#dbdad6"/><rect x="524" y="542" width="12" height="75" fill="#4e79a7"/><rect x="536" y="557" width="15" height="61" fill="#dbdad6"/><rect x="537" y="558" width="13" height="59" fill="#4e79a7"/><rect x="550" y="509" width="14" height="109" fill="#dbdad6"/><rect x="551" y="510" width="12" height="107" fill="#4e79a7"/><rect x="563" y="617" width="15" height="19" fill="#dbdad6"/><rect x="564" y="618" width="13" height="17" fill="#e15759"/><rect x="577" y="501" width="14" height="117" fill="#dbdad6"/><rect x="578" y="502" width="12" height="115" fill="#4e79a7"/><rect x="590" y="436" width="15" height="182" fill="#dbdad6"/><rect x="591" y="437" width="13" height="180" fill="#4e79a7"/><rect x="604" y="542" width="15" height="76" fill="#dbdad6"/><rect x="605" y="543" width="13" height="74" fill="#4e79a7"/><rect x="618" y="415" width="14" height="203" fill="#dbdad6"/><rect x="619" y="416" width="12" height="201" fill="#4e79a7"/><rect x="631" y="421" width="15" height="197" fill="#dbdad6"/><rect x="632" y="422" width="13" height="195" fill="#4e79a7"/><rect x="645" y="617" width="14" height="72" fill="#dbdad6"/><rect x="646" y="618" width="12" height="70" fill="#e15759"/><rect x="658" y="556" width="15" height="62" fill="#dbdad6"/><rect x="659" y="557" width="13" height="60" fill="#4e79a7"/><rect x="672" y="405" width="14" height="213" fill="#dbdad6"/><rect x="673" y="406" width="12" height="211" fill="#4e79a7"/><rect x="685" y="526" width="15" height="92" fill="#dbdad6"/><rect x="686" y="527" width="13" height="90" fill="#4e79a7"/><rect x="699" y="515" width="14" height="103" fill="#dbdad6"/><rect x="700" y="516" width="12" height="101" fill="#4e79a7"/><rect x="712" y="544" width="15" height="74" fill="#dbdad6"/><rect x="713" y="545" width="13" height="72" fill="#4e79a7"/><rect x="726" y="545" width="14" height="73" fill="#dbdad6"/><rect x="727" y="546" width="12" height="71" fill="#4e79a7"/><rect x="739" y="500" width="15" height="118" fill="#dbdad6"/><rect x="740" y="501" width="13" height="116" fill="#4e79a7"/><rect x="753" y="438" width="14" height="180" fill="#dbdad6"/><rect x="754" y="439" width="12" height="178" fill="#4e79a7"/><rect x="766" y="555" width="15" height="63" fill="#dbdad6"/><rect x="767" y="556" width="13" height="61" fill="#4e79a7"/><rect x="780" y="346" width="15" height="272" fill="#dbdad6"/><rect x="781" y="347" width="13" height="270" fill="#4e79a7"/><rect x="794" y="442" width="14" height="176" fill="#dbdad6"/><rect x="795" y="443" width="12" height="174" fill="#4e79a7"/><rect x="807" y="555" width="15" height="63" fill="#dbdad6"/><rect x="808" y="556" width="13" height="61" fill="#4e79a7"/><rect x="821" y="508" width="14" height="110" fill="#dbdad6"/><rect x="822" y="509" width="12" height="108" fill="#4e79a7"/><rect x="834" y="538" width="15" height="80" fill="#dbdad6"/><rect x="835" y="539" width="13" height="78" fill="#4e79a7"/><rect x="848" y="552" width="14" height="66" fill="#dbdad6"/><rect x="849" y="553" width="12" height="64" fill="#4e79a7"/><rect x="861" y="428" width="15" height="190" fill="#dbdad6"/><rect x="862" y="429" width="13" height="188" fill="#4e79a7"/><rect x="875" y="513" width="14" height="105" fill="#dbdad6"/><rect x="876" y="514" width="12" height="103" fill="#4e79a7"/><rect x="888" y="520" width="15" height="98" fill="#dbdad6"/><rect x="889" y="521" width="13" height="96" fill="#4e79a7"/><rect x="902" y="572" width="14" height="46" fill="#dbdad6"/><rect x="903" y="573" width="12" height="44" fill="#4e79a7"/><rect x="915" y="414" width="15" height="204" fill="#dbdad6"/><rect x="916" y="415" width="13" height="202" fill="#4e79a7"/><rect x="929" y="264" width="14" height="354" fill="#dbdad6"/><rect x="930" y="265" width="12" height="352" fill="#4e79a7"/><rect x="942" y="530" width="15" height="88" fill="#dbdad6"/><rect x="943" y="531" width="13" height="86" fill="#4e79a7"/><rect x="956" y="228" width="15" height="390" fill="#dbdad6"/><rect x="957" y="229" width="13" height="388" fill="#4e79a7"/><rect x="970" y="462" width="14" height="156" fill="#dbdad6"/><rect x="971" y="463" width="12" height="154" fill="#4e79a7"/><rect x="983" y="582" width="15" height="36" fill="#dbdad6"/><rect x="984" y="583" width="13" height="34" fill="#4e79a7"/><rect x="997" y="296" width="14" height="322" fill="#dbdad6"/><rect x="998" y="297" width="12" height="320" fill="#4e79a7"/><rect x="1010" y="596" width="15" height="22" fill="#dbdad6"/><rect x="1011" y="597" width="13" height="20" fill="#4e79a7"/><rect x="1024" y="479" width="14" height="139" fill="#dbdad6"/><rect x="1025" y="480" width="12" height="137" fill="#4e79a7"/><rect x="1037" y="438" width="15" height="180" fill="#dbdad6"/><rect x="1038" y="439" width="13" height="178" fill="#4e79a7"/><rect x="1051" y="466" width="14" height="152" fill="#dbdad6"/><rect x="1052" y="467" width="12" height="150" fill="#4e79a7"/><rect x="1064" y="420" width="15" height="198" fill="#dbdad6"/><rect x="1065" y="421" width="13" height="196" fill="#4e79a7"/><rect x="1078" y="378" width="14" height="240" fill="#dbdad6"/><rect x="1079" y="379" width="12" height="238" fill="#4e79a7"/><rect x="1091" y="415" width="15" height="203" fill="#dbdad6"/><rect x="1092" y="416" width="13" height="201" fill="#4e79a7"/><rect x="1105" y="406" width="14" height="212" fill="#dbdad6"/><rect x="1106" y="407" width="12" height="210" fill="#4e79a7"/><rect x="1118" y="432" width="15" height="186" fill="#dbdad6"/><rect x="1119" y="433" width="13" height="184" fill="#4e79a7"/><path d="M450.5 205V711.5H1165" fill="none" stroke="#000" stroke-width="1"/><path d="M455.0 712.5V716" stroke="#e8e6de" stroke-width="1"/><path d="M536.3 712.5V716" stroke="#e8e6de" stroke-width="1"/><path d="M617.5 712.5V716" stroke="#e8e6de" stroke-width="1"/><path d="M698.7 712.5V716" stroke="#e8e6de" stroke-width="1"/><path d="M780.0 712.5V716" stroke="#e8e6de" stroke-width="1"/><path d="M861.2 712.5V716" stroke="#e8e6de" stroke-width="1"/><path d="M942.5 712.5V716" stroke="#e8e6de" stroke-width="1"/><path d="M1023.7 712.5V716" stroke="#e8e6de" stroke-width="1"/><path d="M1104.9 712.5V716" stroke="#e8e6de" stroke-width="1"/></svg>
<div class="t" style="left:-156.50px;width:600px;text-align:right;top:696.63px;font-size:12.6px;line-height:12.6px;color:#6e6e6e;font-weight:normal;font-style:normal;">-4K</div>
<div class="t" style="left:-156.50px;width:600px;text-align:right;top:655.07px;font-size:12.6px;line-height:12.6px;color:#6e6e6e;font-weight:normal;font-style:normal;">-2K</div>
<div class="t" style="left:-156.50px;width:600px;text-align:right;top:611.63px;font-size:12.6px;line-height:12.6px;color:#6e6e6e;font-weight:normal;font-style:normal;">0K</div>
<div class="t" style="left:-156.50px;width:600px;text-align:right;top:568.19px;font-size:12.6px;line-height:12.6px;color:#6e6e6e;font-weight:normal;font-style:normal;">2K</div>
<div class="t" style="left:-156.50px;width:600px;text-align:right;top:524.75px;font-size:12.6px;line-height:12.6px;color:#6e6e6e;font-weight:normal;font-style:normal;">4K</div>
<div class="t" style="left:-156.50px;width:600px;text-align:right;top:481.31px;font-size:12.6px;line-height:12.6px;color:#6e6e6e;font-weight:normal;font-style:normal;">6K</div>
<div class="t" style="left:-156.50px;width:600px;text-align:right;top:437.87px;font-size:12.6px;line-height:12.6px;color:#6e6e6e;font-weight:normal;font-style:normal;">8K</div>
<div class="t" style="left:-156.50px;width:600px;text-align:right;top:394.43px;font-size:12.6px;line-height:12.6px;color:#6e6e6e;font-weight:normal;font-style:normal;">10K</div>
<div class="t" style="left:-156.50px;width:600px;text-align:right;top:350.99px;font-size:12.6px;line-height:12.6px;color:#6e6e6e;font-weight:normal;font-style:normal;">12K</div>
<div class="t" style="left:-156.50px;width:600px;text-align:right;top:307.55px;font-size:12.6px;line-height:12.6px;color:#6e6e6e;font-weight:normal;font-style:normal;">14K</div>
<div class="t" style="left:-156.50px;width:600px;text-align:right;top:264.11px;font-size:12.6px;line-height:12.6px;color:#6e6e6e;font-weight:normal;font-style:normal;">16K</div>
<div class="t" style="left:-156.50px;width:600px;text-align:right;top:220.67px;font-size:12.6px;line-height:12.6px;color:#6e6e6e;font-weight:normal;font-style:normal;">18K</div>
<div class="t" style="left:452.50px;top:720.96px;font-size:12.1px;line-height:12.1px;color:#6e6e6e;font-weight:normal;font-style:normal;">Nov 14</div>
<div class="t" style="left:236.26px;width:600px;text-align:center;top:720.96px;font-size:12.1px;line-height:12.1px;color:#6e6e6e;font-weight:normal;font-style:normal;">May 15</div>
<div class="t" style="left:317.50px;width:600px;text-align:center;top:720.96px;font-size:12.1px;line-height:12.1px;color:#6e6e6e;font-weight:normal;font-style:normal;">Nov 15</div>
<div class="t" style="left:398.74px;width:600px;text-align:center;top:720.96px;font-size:12.1px;line-height:12.1px;color:#6e6e6e;font-weight:normal;font-style:normal;">May 16</div>
<div class="t" style="left:479.98px;width:600px;text-align:center;top:720.96px;font-size:12.1px;line-height:12.1px;color:#6e6e6e;font-weight:normal;font-style:normal;">Nov 16</div>
<div class="t" style="left:561.22px;width:600px;text-align:center;top:720.96px;font-size:12.1px;line-height:12.1px;color:#6e6e6e;font-weight:normal;font-style:normal;">May 17</div>
<div class="t" style="left:642.46px;width:600px;text-align:center;top:720.96px;font-size:12.1px;line-height:12.1px;color:#6e6e6e;font-weight:normal;font-style:normal;">Nov 17</div>
<div class="t" style="left:723.70px;width:600px;text-align:center;top:720.96px;font-size:12.1px;line-height:12.1px;color:#6e6e6e;font-weight:normal;font-style:normal;">May 18</div>
<div class="t" style="left:804.94px;width:600px;text-align:center;top:720.96px;font-size:12.1px;line-height:12.1px;color:#6e6e6e;font-weight:normal;font-style:normal;">Nov 18</div>
<div class="t" style="left:507.00px;width:600px;text-align:center;top:746.29px;font-size:16.9px;line-height:16.9px;color:#555;font-weight:normal;font-style:normal;">Month of Order Date</div>
<div class="t" style="left:363.6px;top:447.6px;width:80px;height:18px;text-align:center;font-size:15px;line-height:18px;color:#555;letter-spacing:1.3px;transform:rotate(-90deg);">Profit</div>
<div class="r" style="left:0px;top:787px;width:1179px;height:30px;background:#e6e6e6;"></div>
<div class="r" style="left:0px;top:787px;width:1179px;height:1px;background:#d0d0d0;"></div>
<div class="r" style="left:128px;top:788px;width:104px;height:29px;background:#f9f9f8;"></div>
<div class="r" style="left:128px;top:788px;width:1px;height:29px;background:#cfcfcf;"></div>
<div class="r" style="left:232px;top:788px;width:1px;height:29px;background:#cfcfcf;"></div>
<div class="r" style="left:333px;top:788px;width:1px;height:29px;background:#cfcfcf;"></div>
<div class="r" style="left:469px;top:788px;width:1px;height:29px;background:#cfcfcf;"></div>
<div class="r" style="left:604px;top:788px;width:1px;height:29px;background:#cfcfcf;"></div>
<div class="r" style="left:636px;top:788px;width:1px;height:29px;background:#cfcfcf;"></div>
<div class="r" style="left:668px;top:788px;width:1px;height:29px;background:#cfcfcf;"></div>
<div class="r" style="left:700px;top:788px;width:1px;height:29px;background:#cfcfcf;"></div>
<svg class="r" style="left:8px;top:795px;" width="9" height="14" viewBox="0 0 9 14"><g fill="none" stroke="#666" stroke-width="1"><ellipse cx="4" cy="2.2" rx="3.5" ry="1.7"/><path d="M0.5 2.2V11.3Q0.5 13 4 13Q7.5 13 7.5 11.3V2.2"/></g></svg>
<div class="t" style="left:22.50px;top:796.76px;font-size:12.1px;line-height:12.1px;color:#666;font-weight:normal;font-style:normal;">Data Source</div>
<div class="t" style="left:135.50px;top:795.03px;font-size:13.2px;line-height:13.2px;color:#333;font-weight:normal;font-style:normal;-webkit-text-stroke:0.25px #333;">Profit over time</div>
<div class="t" style="left:238.30px;top:796.76px;font-size:12.1px;line-height:12.1px;color:#666;font-weight:normal;font-style:normal;">Sales over time</div>
<div class="t" style="left:339.60px;top:796.46px;font-size:12.45px;line-height:12.45px;color:#666;font-weight:normal;font-style:normal;">Profit Ratio over time</div>
<div class="t" style="left:475.50px;top:796.25px;font-size:12.7px;line-height:12.7px;color:#666;font-weight:normal;font-style:normal;">Distrubution of profit</div>
<svg class="r" style="left:0px;top:0px;" width="1" height="1" viewBox="0 0 1 1"><rect x="614.5" y="796.5" width="10.5" height="10" rx="1" fill="none" stroke="#666" stroke-width="1.1"/><path d="M617.8 805V803.2M620.3 805V800.3M622.8 805V801.8" stroke="#555" stroke-width="1.1"/><rect x="620" y="802" width="10" height="10" fill="#e6e6e6"/><path d="M625 803.2V810.8M621.2 807H628.8" stroke="#555" stroke-width="1.8"/></svg>
<svg class="r" style="left:0px;top:0px;" width="1" height="1" viewBox="0 0 1 1"><rect x="646.5" y="796.5" width="10.5" height="10" rx="1.5" fill="none" stroke="#666" stroke-width="1.1"/><path d="M651.7 796.5V806.5M646.5 801.5H657" stroke="#666" stroke-width="1.1"/><rect x="652" y="802" width="10" height="10" fill="#e6e6e6"/><path d="M657 803.2V810.8M653.2 807H660.8" stroke="#555" stroke-width="1.8"/></svg>
<svg class="r" style="left:0px;top:0px;" width="1" height="1" viewBox="0 0 1 1"><path d="M678.5 796.5L683 799L688 796.5V806.5L683 809L678.5 806.5Z M683 799V809" fill="none" stroke="#666" stroke-width="1.1" stroke-linejoin="round"/><rect x="683.7" y="802" width="10" height="10" fill="#e6e6e6"/><path d="M688.7 803.2V810.8M684.9000000000001 807H692.5" stroke="#555" stroke-width="1.8"/></svg>
<div class="r" style="left:0px;top:817px;width:1179px;height:21px;background:#ebebeb;"></div>
<div class="r" style="left:0px;top:817px;width:1179px;height:1px;background:#d0d0d0;"></div>
<div class="t" style="left:2.00px;top:823.02px;font-size:11.2px;line-height:11.2px;color:#333;font-weight:normal;font-style:normal;">48 marks</div>
<div class="t" style="left:66.00px;top:823.02px;font-size:11.2px;line-height:11.2px;color:#333;font-weight:normal;font-style:normal;">1 row by 1 column</div>
<div class="t" style="left:171.00px;top:822.68px;font-size:11.6px;line-height:11.6px;color:#333;font-weight:normal;font-style:normal;">SUM(Profit): 286K</div>
<div class="r" style="left:813px;top:818px;width:1px;height:20px;background:#cfcfcf;"></div>
<div class="r" style="left:940px;top:818px;width:1px;height:20px;background:#cfcfcf;"></div>
<div class="r" style="left:967px;top:818px;width:1px;height:20px;background:#cfcfcf;"></div>
<div class="r" style="left:994px;top:818px;width:1px;height:20px;background:#cfcfcf;"></div>
<div class="r" style="left:1041px;top:818px;width:1px;height:20px;background:#cfcfcf;"></div>
<div class="r" style="left:1112px;top:818px;width:1px;height:20px;background:#cfcfcf;"></div>
<svg class="r" style="left:1050px;top:823px;" width="60" height="9" viewBox="0 0 60 9"><rect x="0" y="0.5" width="1.2" height="8" fill="#aaa"/><path d="M6.5 0.5V8.5L2 4.5Z" fill="#aaa"/><path d="M22 0.5V8.5L17.5 4.5Z" fill="#aaa"/><path d="M33 0.5V8.5L37.5 4.5Z" fill="#aaa"/><path d="M48 0.5V8.5L52.5 4.5Z" fill="#aaa"/><rect x="53.5" y="0.5" width="1.2" height="8" fill="#aaa"/></svg>
<svg class="r" style="left:1121px;top:822px;" width="12" height="12" viewBox="0 0 12 12"><rect x="0" y="0" width="3" height="3" fill="#aaa"/><rect x="0" y="4.5" width="3" height="3" fill="#aaa"/><rect x="0" y="9" width="3" height="3" fill="#aaa"/><rect x="4.5" y="0" width="3" height="3" fill="#aaa"/><rect x="4.5" y="4.5" width="3" height="3" fill="#aaa"/><rect x="4.5" y="9" width="3" height="3" fill="#aaa"/><rect x="9" y="0" width="3" height="3" fill="#aaa"/><rect x="9" y="4.5" width="3" height="3" fill="#aaa"/><rect x="9" y="9" width="3" height="3" fill="#aaa"/></svg>
<svg class="r" style="left:1142px;top:822px;" width="12" height="12" viewBox="0 0 12 12"><rect x="0" y="0" width="11.5" height="7" fill="#aaa"/><rect x="0" y="8.8" width="3" height="3" fill="#aaa"/><rect x="4.2" y="8.8" width="3" height="3" fill="#aaa"/><rect x="8.5" y="8.8" width="3" height="3" fill="#aaa"/></svg>
<div class="r" style="left:1163px;top:822px;width:11px;height:11px;background:#606060;"></div>
</body></html>
